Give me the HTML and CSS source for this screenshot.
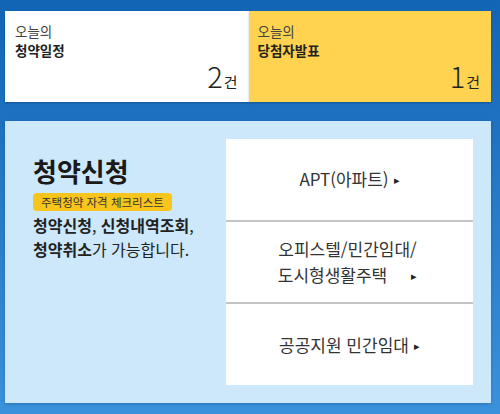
FILE: index.html
```html
<!DOCTYPE html>
<html lang="ko">
<head>
    <meta charset="UTF-8">
    <meta name="viewport" content="width=device-width, initial-scale=1.0">
    <title>청약신청</title>
    <link rel="stylesheet" href="styles.css">
</head>
<body>
    <div class="wrap">
        <div class="today">
            <div class="today-card">
                <div class="today-label">오늘의</div>
                <div class="today-title">청약일정</div>
                <div class="today-count"><span class="num">2</span>건</div>
            </div>
            <div class="today-card yellow">
                <div class="today-label">오늘의</div>
                <div class="today-title">당첨자발표</div>
                <div class="today-count"><span class="num">1</span>건</div>
            </div>
        </div>

        <div class="apply">
            <div class="apply-info">
                <h2>청약신청</h2>
                <span class="badge">주택청약 자격 체크리스트</span>
                <p><b>청약신청</b>, <b>신청내역조회</b>,<br><b>청약취소</b>가 가능합니다.</p>
            </div>
            <div class="apply-links">
                <a href="#"><span>APT(아파트)<span class="arrow">&#9656;</span></span></a>
                <a href="#"><span class="shift">오피스텔/민간임대/<br>도시형생활주택<span class="arrow wide">&#9656;</span></span></a>
                <a href="#"><span>공공지원 민간임대<span class="arrow">&#9656;</span></span></a>
            </div>
        </div>
    </div>
</body>
</html>
```

FILE: styles.css
```css
body {
    margin: 0;
    padding: 0;
    font-family: "Noto Sans CJK KR", "Noto Sans", sans-serif;
    background: linear-gradient(#1264b5, #3b91dc);
    height: 414px;
    overflow: hidden;
}

.wrap {
    padding: 11px 9px 0 5px;
}

.today {
    display: flex;
    height: 91px;
}

.today-card {
    flex: 1;
    display: flex;
    flex-direction: column;
    background-color: #fff;
    padding: 11px 11px 6px 10px;
    box-shadow: 0 1px 2px rgba(0, 0, 0, 0.25);
}

.today-card.yellow {
    background-color: #ffd24f;
    padding-left: 9px;
}

.today-label {
    font-size: 13.5px;
    line-height: 19px;
    color: #444;
}

.today-title {
    font-size: 13.5px;
    line-height: 19px;
    font-weight: bold;
    color: #222;
}

.today-count {
    margin-top: auto;
    text-align: right;
    font-size: 15px;
    line-height: 30px;
    color: #222;
}

.today-count .num {
    font-size: 29px;
    font-weight: 300;
    margin-right: 1px;
}

.apply {
    display: flex;
    margin-top: 19px;
    height: 246px;
    padding: 18px 18px 18px 28px;
    background-color: #cde8fb;
    box-shadow: 0 1px 3px rgba(0, 0, 0, 0.2);
}

.apply-info {
    flex: 1;
    padding-top: 15px;
}

.apply-info h2 {
    margin: 0;
    font-size: 26px;
    line-height: 34px;
    font-weight: bold;
    color: #1a1a1a;
}

.badge {
    display: inline-block;
    margin-top: 4px;
    padding: 0 8px;
    background-color: #f8c51c;
    border-radius: 4px;
    font-size: 11.5px;
    line-height: 18px;
    color: #333;
}

.apply-info p {
    margin: 1px 0 0;
    font-size: 16px;
    line-height: 24px;
    color: #222;
}

.apply-links {
    width: 247px;
    display: flex;
    flex-direction: column;
    background-color: #fff;
}

.apply-links a {
    flex: 1;
    display: flex;
    align-items: center;
    justify-content: center;
    text-align: center;
    font-size: 17px;
    line-height: 26px;
    color: #333;
    text-decoration: none;
    border-bottom: 2px solid #c4c4c4;
}

.apply-links a:last-child {
    border-bottom: none;
}

.apply-links .shift {
    margin-left: -4px;
}

.arrow {
    display: inline-block;
    font-size: 11px;
    margin-left: 5px;
    vertical-align: 2px;
    color: #222;
}

.arrow.wide {
    margin-left: 24px;
}
```
